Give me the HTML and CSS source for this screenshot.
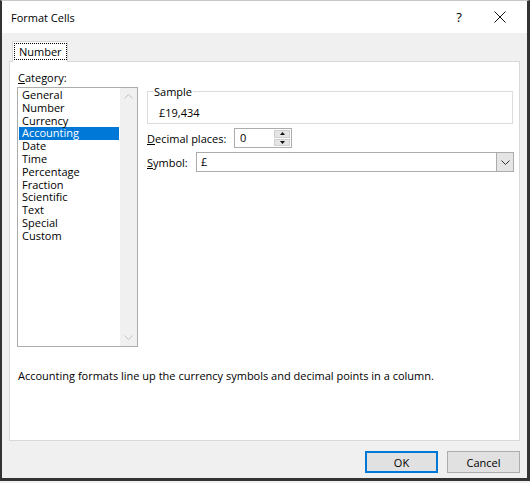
FILE: index.html
```html
<!DOCTYPE html>
<html>
<head>
<meta charset="utf-8">
<link rel="stylesheet" href="styles.css">
</head>
<body>
<div class="window">
  <div class="titlebar">
    <span class="title">Format Cells</span>
    <span class="help">?</span>
    <span class="close">
      <svg width="12" height="12" viewBox="0 0 12 12"><path d="M0.5 0.5 L11.5 11.5 M11.5 0.5 L0.5 11.5" stroke="#111" stroke-width="1" fill="none"/></svg>
    </span>
  </div>
  <div class="body">
    <div class="tabs">
      <div class="tab"><span class="focus">Number</span></div>
    </div>
    <div class="panel">
      <div class="columns">
        <div class="left">
          <div class="label"><u>C</u>ategory:</div>
          <div class="listbox">
            <ul class="items">
              <li>General</li>
              <li>Number</li>
              <li>Currency</li>
              <li class="selected">Accounting</li>
              <li>Date</li>
              <li>Time</li>
              <li>Percentage</li>
              <li>Fraction</li>
              <li>Scientific</li>
              <li>Text</li>
              <li>Special</li>
              <li>Custom</li>
            </ul>
            <div class="scrollbar">
              <svg width="9" height="5" viewBox="0 0 9 5"><polyline points="0.5,4.5 4.5,0.5 8.5,4.5" stroke="#c2c2c2" stroke-width="1" fill="none"/></svg>
              <svg width="9" height="5" viewBox="0 0 9 5"><polyline points="0.5,0.5 4.5,4.5 8.5,0.5" stroke="#c2c2c2" stroke-width="1" fill="none"/></svg>
            </div>
          </div>
        </div>
        <div class="right">
          <fieldset class="group">
            <legend>Sample</legend>
            <div class="sample">£19,434</div>
          </fieldset>
          <div class="row">
            <span class="dec-label"><u>D</u>ecimal places:</span>
            <div class="spin">
              <span class="spin-value">0</span>
              <div class="spin-buttons">
                <div class="spin-btn"><svg width="5" height="3" viewBox="0 0 5 3"><polygon points="0,3 2.5,0 5,3" fill="#111"/></svg></div>
                <div class="spin-btn"><svg width="5" height="3" viewBox="0 0 5 3"><polygon points="0,0 2.5,3 5,0" fill="#111"/></svg></div>
              </div>
            </div>
          </div>
          <div class="row">
            <span class="sym-label"><u>S</u>ymbol:</span>
            <div class="combo">
              <span class="combo-value">£</span>
              <div class="combo-btn"><svg width="9" height="5" viewBox="0 0 9 5"><polyline points="0.5,0.5 4.5,4.5 8.5,0.5" stroke="#333" stroke-width="1" fill="none"/></svg></div>
            </div>
          </div>
        </div>
      </div>
      <p class="desc">Accounting formats line up the currency symbols and decimal points in a column.</p>
    </div>
    <div class="buttons">
      <button class="btn default">OK</button>
      <button class="btn">Cancel</button>
    </div>
  </div>
</div>
</body>
</html>
```
FILE: styles.css
```css
* { box-sizing: border-box; }
html, body { margin: 0; padding: 0; background: #f0f0f0; }
body {
  font-family: "Open Sans", "Noto Sans", sans-serif;
  font-size: 11px;
  color: #000;
}
.window {
  width: 530px;
  height: 481px;
  border-top: 1px solid #c8c8c8;
  border-left: 2px solid #333;
  border-right: 3px solid #333;
  border-bottom: 3px solid #333;
  display: flex;
  flex-direction: column;
  background: #f0f0f0;
}
.titlebar {
  height: 32px;
  background: #fff;
  display: flex;
  align-items: center;
  padding-left: 9px;
}
.title { flex: 1; font-size: 11px; }
.help { width: 14px; font-size: 13px; margin-right: 28px; text-align: center; }
.close { display: flex; margin-right: 21px; }
.body {
  flex: 1;
  padding: 8px 7px 0 7px;
  display: flex;
  flex-direction: column;
}
.tabs { display: flex; padding-left: 3px; height: 20px; }
.tab {
  position: relative;
  z-index: 1;
  height: 21px;
  width: 56px;
  background: #fff;
  border: 1px solid #d9d9d9;
  border-bottom: none;
  padding: 1px 0 0 1px;
}
.focus {
  display: inline-block;
  border: 1px dotted #000;
  padding: 0 4px 0 4px;
  line-height: 15px;
}
.panel {
  height: 380px;
  background: #fff;
  border: 1px solid #d9d9d9;
  padding: 8px 6px 0 7px;
}
.columns { display: flex; gap: 9px; }
.left { width: 121px; }
.label { line-height: 15px; margin-left: 1px; }
.listbox {
  margin-top: 2px;
  height: 260px;
  border: 1px solid #acacac;
  display: flex;
}
.items {
  flex: 1;
  list-style: none;
  margin: 0;
  padding: 1px 1px 0 1px;
}
.items li {
  height: 12.8px;
  line-height: 12.8px;
  padding-left: 3px;
  white-space: nowrap;
}
.items li.selected { background: #0078d7; color: #fff; }
.scrollbar {
  width: 17px;
  background: #f0f0f0;
  display: flex;
  flex-direction: column;
  justify-content: space-between;
  align-items: center;
  padding: 6px 0 6px 0;
}
.right { flex: 1; padding-top: 14px; }
.group {
  margin: 0;
  border: 1px solid #dcdcdc;
  padding: 6px 5px 2px 5px;
  height: 40px;
}
.group legend { padding: 0 1px; line-height: 15px; }
.sample { padding-left: 6px; line-height: 15px; }
.row { display: flex; align-items: center; margin-top: 4px; height: 20px; }
.dec-label { width: 87px; padding-top: 1px; }
.sym-label { width: 49px; padding-top: 1px; }
.spin {
  width: 58px;
  height: 20px;
  border: 1px solid #acacac;
  display: flex;
  padding: 1px;
}
.spin-value { flex: 1; padding-left: 4px; line-height: 16px; }
.spin-buttons { width: 16px; display: flex; flex-direction: column; gap: 1px; }
.spin-btn {
  flex: 1;
  background: #e5e5e5;
  border: 1px solid #cfcfcf;
  display: flex;
  align-items: center;
  justify-content: center;
}
.combo {
  flex: 1;
  margin-right: -1px;
  height: 20px;
  border: 1px solid #acacac;
  display: flex;
}
.combo-value { flex: 1; padding-left: 4px; line-height: 18px; }
.combo-btn {
  width: 17px;
  background: #e5e5e5;
  border-left: 1px solid #acacac;
  display: flex;
  align-items: center;
  justify-content: center;
}
.desc { margin: 21px 0 0 1px; line-height: 15px; }
.buttons {
  display: flex;
  justify-content: flex-end;
  gap: 9px;
  margin-top: 10px;
}
.btn {
  width: 73px;
  height: 22px;
  font-family: inherit;
  font-size: 11px;
  background: #e1e1e1;
  border: 1px solid #adadad;
  padding: 0;
  color: #000;
}
.btn.default { border: 2px solid #0078d7; }
```
